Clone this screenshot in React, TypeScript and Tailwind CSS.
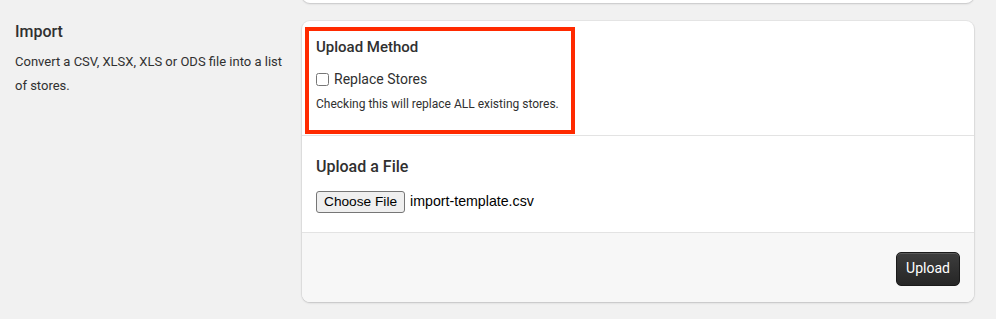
import React from "react";

const font = { fontFamily: "Roboto, 'Liberation Sans', sans-serif" };

export default function App() {
  return (
    <div className="h-[319px] w-[996px] overflow-hidden bg-[#f1f1f1] text-[#303030]" style={font}>
      <div className="flex gap-0">
        {/* left description column */}
        <div className="w-[302px] shrink-0 pl-[15px] pr-5 pt-[22px]">
          <h2 className="text-[16px] font-medium leading-[20px] text-[#303030]">Import</h2>
          <p className="mt-[8px] text-[13px] leading-[24px] text-[#303030]">
            Convert a CSV, XLSX, XLS or ODS file into a list of stores.
          </p>
        </div>

        {/* right cards column */}
        <div className="w-[672px] shrink-0">
          <div className="-mt-[20px] h-[23px] rounded-b-[8px] bg-white shadow-[0_0_0_1px_rgba(63,63,68,0.05),0_1px_2px_rgba(63,63,68,0.2)]" />

          <div className="mt-[18px] overflow-hidden rounded-[8px] bg-white shadow-[0_0_0_1px_rgba(63,63,68,0.06),0_1px_2px_rgba(63,63,68,0.22)]">
            <div className="relative h-[114px] px-[14px] pt-[16px]">
              <h3 className="text-[15px] font-medium leading-[20px] text-[#303030]">Upload Method</h3>
              <label className="mt-[14px] flex items-center gap-[5px] text-[14px] leading-[16px] text-[#303030]">
                <input type="checkbox" className="m-0 h-[13px] w-[13px]" />
                Replace Stores
              </label>
              <p className="mt-[10px] text-[12px] leading-[14px] text-[#303030]">
                Checking this will replace ALL existing stores.
              </p>
              <div className="pointer-events-none absolute left-[3px] top-[6px] h-[107px] w-[270px] border-4 border-[#ff2a00]" />
            </div>

            <div className="h-[97px] border-t border-[#e3e3e3] px-[14px] pt-[21px]">
              <h3 className="text-[16px] font-medium leading-[20px] text-[#303030]">Upload a File</h3>
              <div className="mt-[14px] flex items-center gap-[5px]" style={{ fontFamily: "'Liberation Sans', Arial, sans-serif" }}>
                <button
                  type="button"
                  className="h-[22px] rounded-[3px] border border-[#767676] bg-[#efefef] px-[7px] text-[13.7px] leading-[20px] text-black"
                >
                  Choose File
                </button>
                <span className="text-[14.2px] text-black">import-template.csv</span>
              </div>
            </div>

            <div className="flex h-[70px] items-center justify-end border-t border-[#e3e3e3] bg-[#f7f7f7] pr-[14px] pt-[2px]">
              <button
                type="button"
                className="h-[34px] w-[64px] rounded-[5px] border border-[#1a1a1a] bg-gradient-to-b from-[#3d3d3d] to-[#262626] text-[14px] font-normal text-white shadow-[inset_0_1px_0_rgba(255,255,255,0.15)]"
              >
                Upload
              </button>
            </div>
          </div>
        </div>
      </div>
    </div>
  );
}
